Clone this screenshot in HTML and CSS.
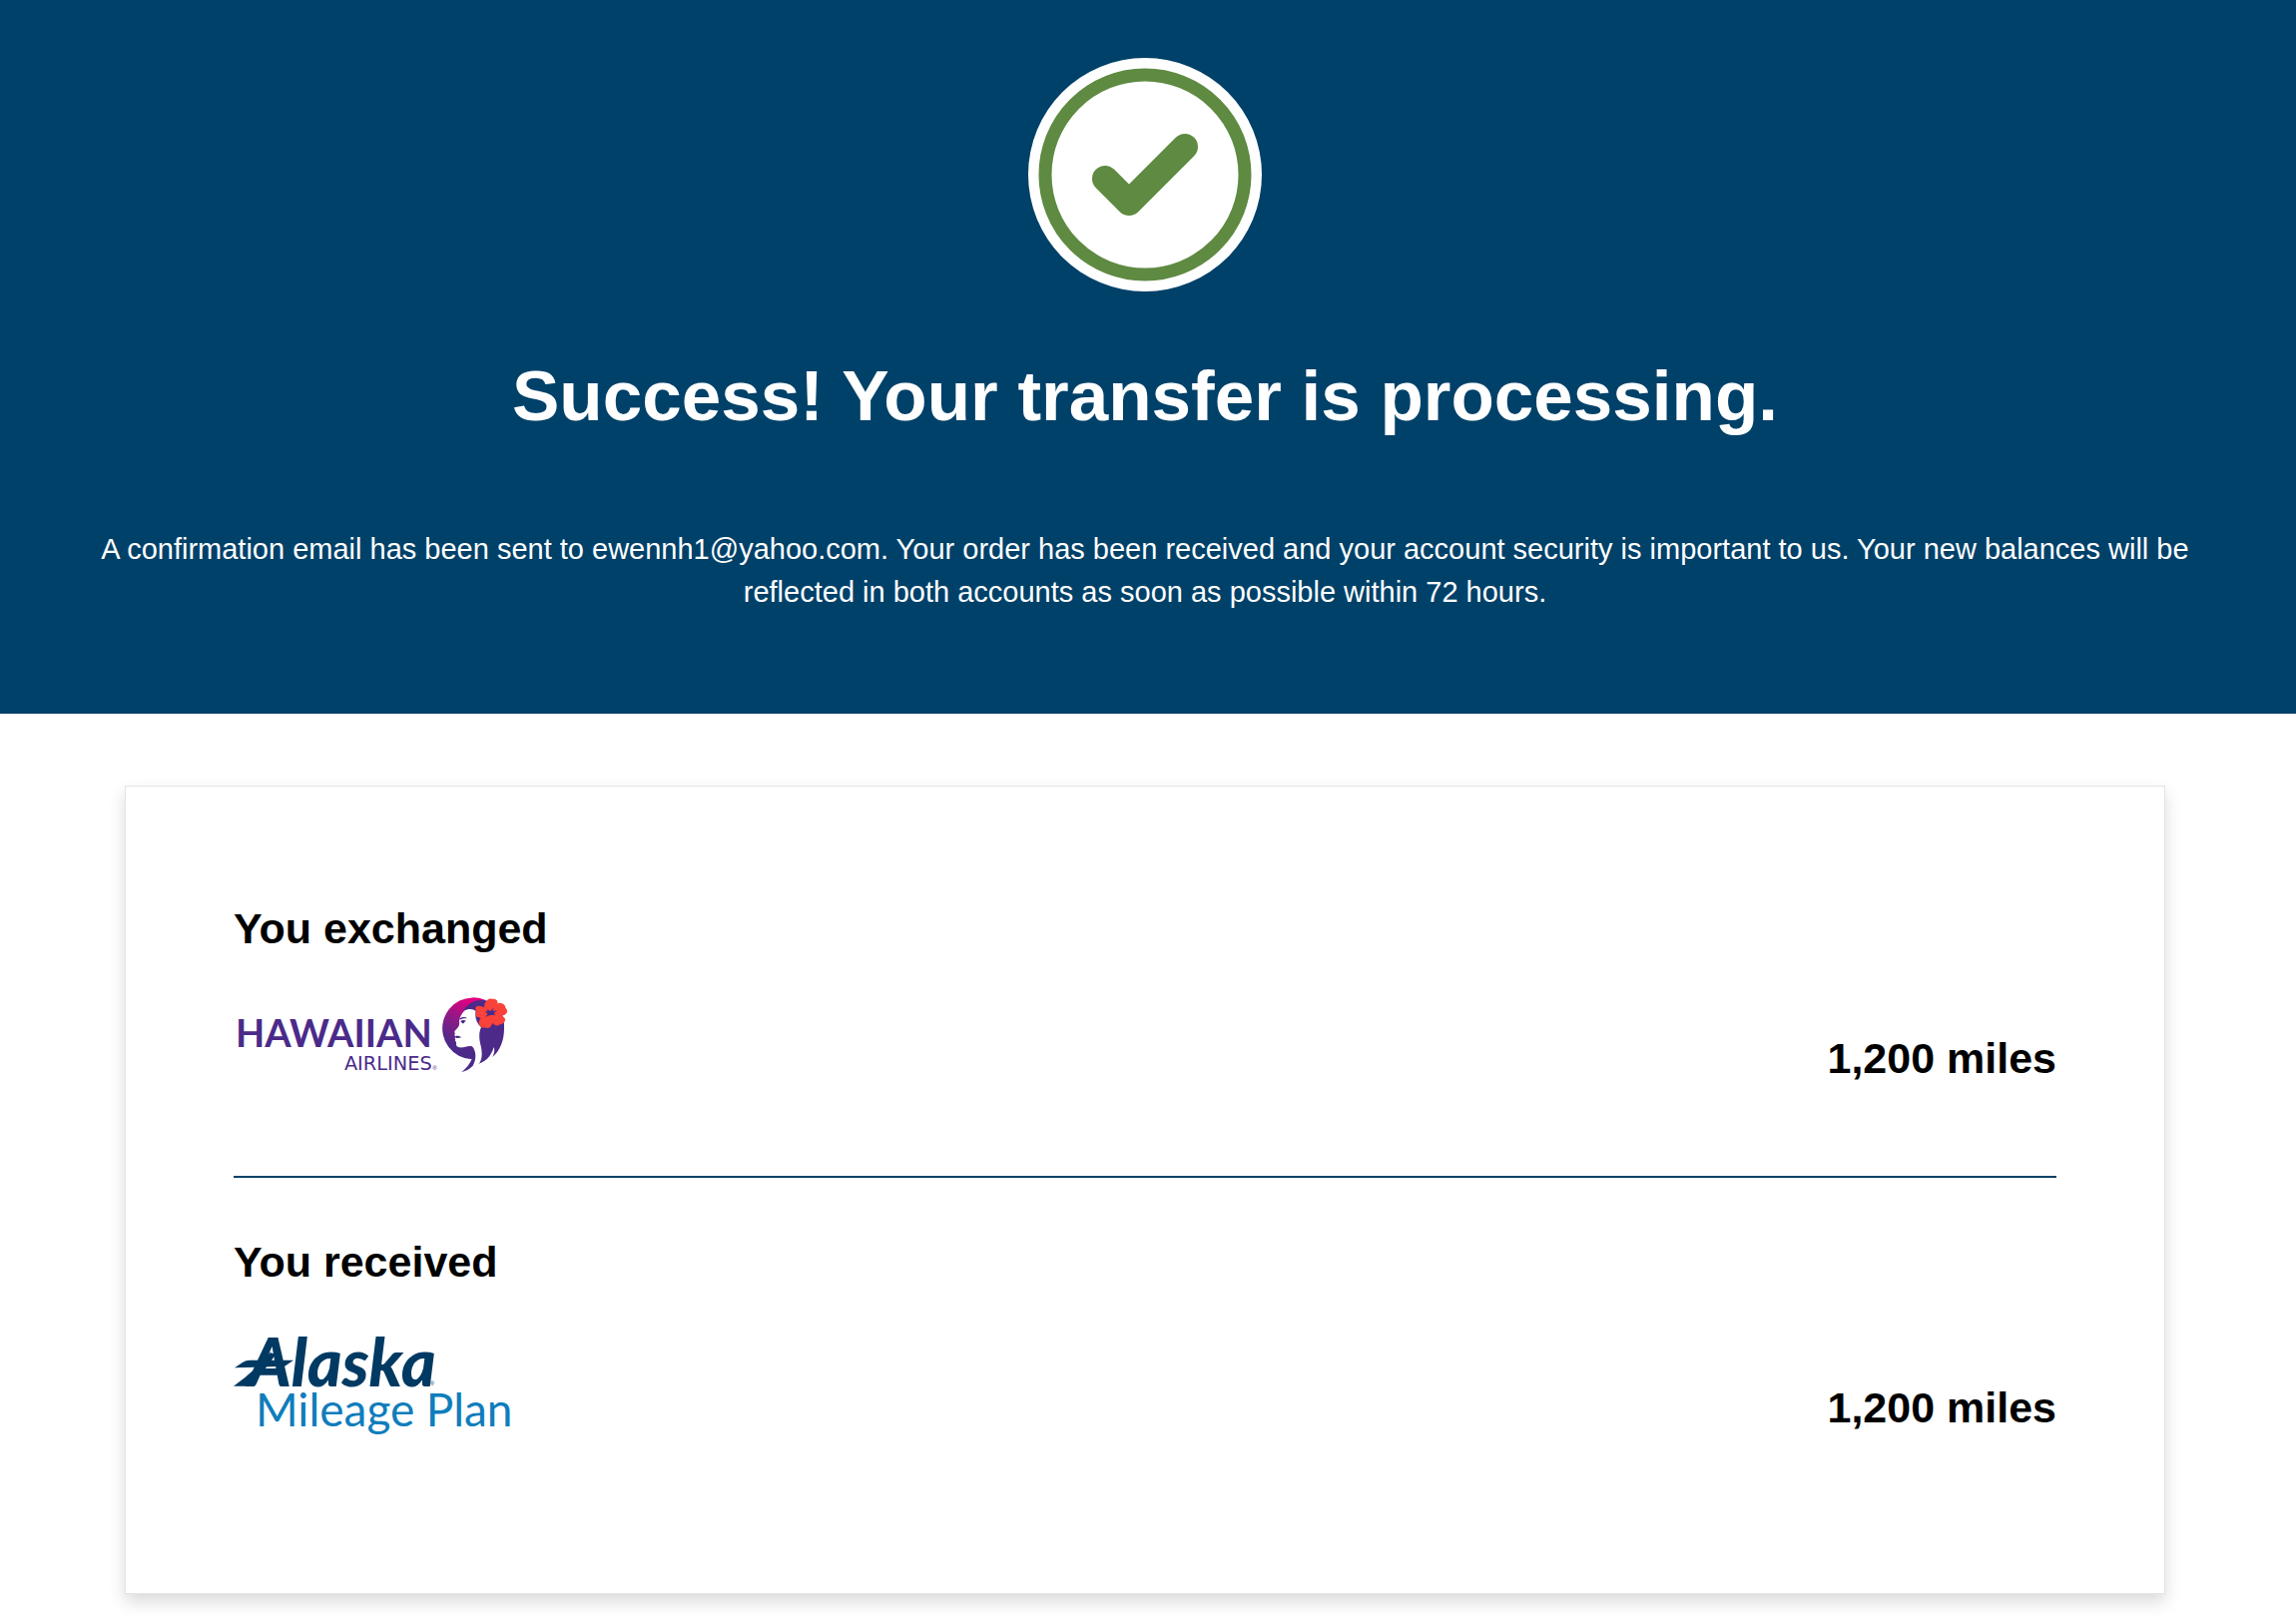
FILE: index.html
```html
<!DOCTYPE html>
<html lang="en">
<head>
  <meta charset="UTF-8" />
  <meta name="viewport" content="width=device-width, initial-scale=1.0"/>
  <title>Transfer processing</title>
  <link rel="stylesheet" href="styles.css">
</head>
<body>
  <header class="hero">
    <svg class="check" viewBox="0 0 702 702" role="img" aria-label="Success">
      <circle cx="351" cy="351" r="351" fill="#fff"/>
      <circle cx="351" cy="351" r="300" fill="none" stroke="#5e8a41" stroke-width="39"/>
      <path d="M231 363L303 435L471 267" fill="none" stroke="#5e8a41" stroke-width="78" stroke-linecap="round" stroke-linejoin="round"/>
    </svg>
    <h1>Success! Your transfer is processing.</h1>
    <p>A confirmation email has been sent to ewennh1@yahoo.com. Your order has been received and your account security is important to us. Your new balances will be reflected in both accounts as soon as possible within 72 hours.</p>
  </header>

  <main class="content">
    <div class="card">
      <section class="exchanged">
        <h2>You exchanged</h2>
        <div class="row">
          <svg class="logo" viewBox="42 42 834 261" role="img" aria-label="Hawaiian Airlines">
            <defs>
              <linearGradient id="sky" x1="0.6" y1="0" x2="0.35" y2="0.8">
                <stop offset="0.05" stop-color="#e0007f"/>
                <stop offset="0.5" stop-color="#8f1a86"/>
                <stop offset="1" stop-color="#4b2a8a"/>
              </linearGradient>
            </defs>
            <text class="hawaiian" x="638" y="192" text-anchor="end">HAWAIIAN</text>
            <text class="airlines" x="638" y="261" text-anchor="end">AIRLINES</text>
            <text class="reg purple" x="640" y="261">®</text>
            <!-- sky -->
            <path d="M800 51A93 93 0 1 0 758 229C764 215 766 200 762 190L775 90Z" fill="url(#sky)"/>
            <!-- hair -->
            <path d="M733 84C742 62 770 46 806 53C840 62 857 98 855 136C855 174 842 204 820 222C826 210 827 201 824 192C816 220 797 242 764 245C754 256 742 264 727 267C741 257 751 244 758 228L770 110Z" fill="#4b2a8a"/>
            <!-- face and neck -->
            <path d="M735 83C746 76 762 76 770 84C766 100 772 120 786 133C778 150 780 170 785 188C790 210 789 228 781 240C776 246 768 247 762 246C769 232 771 218 767 205C764 197 763 192 757 189C745 187 734 195 720 193C710 191 711 184 711 178C709 174 706 172 709 168C705 166 707 163 710 160C705 158 705 154 708 151C704 147 705 145 709 141C718 133 722 126 720 116C721 103 727 92 735 83Z" fill="#fff"/>
            <path d="M722 106C729 101 738 101 745 106C738 105 730 106 722 110Z" fill="#4b2a8a"/>
            <path d="M724 115C730 109 736 111 741 114L736 116C735 121 731 122 728 119Z" fill="#4b2a8a"/>
            <path d="M709 159C716 157 722 159 727 163C720 165 714 166 709 164Z" fill="#4b2a8a"/>
            <!-- flower -->
            <g fill="#f9423a">
              <path d="M812 92C797 86 791 70 799 58C803 50 809 44 819 47C829 46 838 51 835 62C834 74 824 84 812 92Z"/>
              <path d="M812 92C816 75 827 62 841 59C852 60 859 65 860 76C868 82 864 93 855 96C840 102 825 98 812 92Z"/>
              <path d="M812 88C830 90 847 94 857 105C861 116 853 123 843 124C835 131 824 127 818 117C812 108 811 98 812 88Z"/>
              <path d="M816 90C824 107 824 120 813 132C805 139 797 132 792 134C781 132 777 123 780 113C787 98 800 90 816 90Z"/>
              <path d="M814 92C800 105 788 110 779 102C768 103 768 91 773 86C764 76 771 65 782 69C796 70 810 79 814 92Z"/>
            </g>
            <path d="M797 84L806 85L803 77L813 84L824 74L821 85L834 81L824 91L829 96L814 96L799 101L806 93Z" fill="#4b2a8a"/>
          </svg>
          <span class="miles">1,200 miles</span>
        </div>
      </section>

      <section class="received">
        <h2>You received</h2>
        <div class="row">
          <svg class="logo" viewBox="42 330 834 309" role="img" aria-label="Alaska Mileage Plan">
            <text class="alaska" x="650" y="497" text-anchor="end">Alaska</text>
            <!-- swashes behind the first letter -->
            <path d="M45 442L70 425Q78 419 92 419L222 419L196 437Z" fill="#003a63"/>
            <path d="M42 497L80 497Q130 462 168 402L152 396Q108 450 42 497Z" fill="#003a63"/>
            <text class="reg navy" x="632" y="495">®</text>
            <text class="plan" x="108" y="618">Mileage</text>
            <text class="plan" x="620" y="618">Plan</text>
          </svg>
          <span class="miles">1,200 miles</span>
        </div>
      </section>
    </div>
  </main>
</body>
</html>
```
FILE: styles.css
```css
* {
  box-sizing: border-box;
}
body {
  margin: 0;
  font-family: "Liberation Sans", Arial, sans-serif;
  background: #fff;
  color: #000;
}
h1, h2, p {
  margin: 0;
}
.hero {
  padding: 58px 96px 100px 90px;
  background: #004169;
  color: #fff;
  text-align: center;
}
.check {
  display: block;
  width: 234px;
  height: 234px;
  margin: 0 auto 65px;
}
.hero h1 {
  margin-bottom: 92px;
  font-size: 71px;
  line-height: 80px;
}
.hero p {
  font-size: 29px;
  line-height: 43px;
}
.content {
  padding: 72px 131px 32px 125px;
}
.card {
  padding: 116px 108px 160px;
  border: 1px solid #e4e4e6;
  background: #fff;
  box-shadow: 0 8px 16px rgba(0,0,0,0.15);
}
.card h2 {
  margin-bottom: 43px;
  font-size: 43px;
  line-height: 52px;
}
.exchanged {
  padding-bottom: 92px;
  border-bottom: 2px solid #004169;
}
.received {
  padding-top: 58px;
}
.row {
  display: flex;
  justify-content: space-between;
  align-items: flex-end;
}
.logo {
  display: block;
  width: 278px;
  overflow: visible;
}
.miles {
  font-size: 43px;
  font-weight: bold;
  line-height: 52px;
}

/* logo lettering, sizes are in viewBox units */
.hawaiian {
  font: bold 114px Lato, sans-serif;
  fill: #4b2a8a;
}
.airlines {
  font: 58px "DejaVu Sans", sans-serif;
  fill: #4b2a8a;
}
.alaska {
  font: italic 900 198px Lato, sans-serif;
  fill: #003a63;
}
.plan {
  font: 138px Lato, sans-serif;
  fill: #0f7dbb;
}
.reg {
  font: 18px "Liberation Sans", sans-serif;
}
.purple {
  fill: #4b2a8a;
}
.navy {
  fill: #003a63;
}
```
